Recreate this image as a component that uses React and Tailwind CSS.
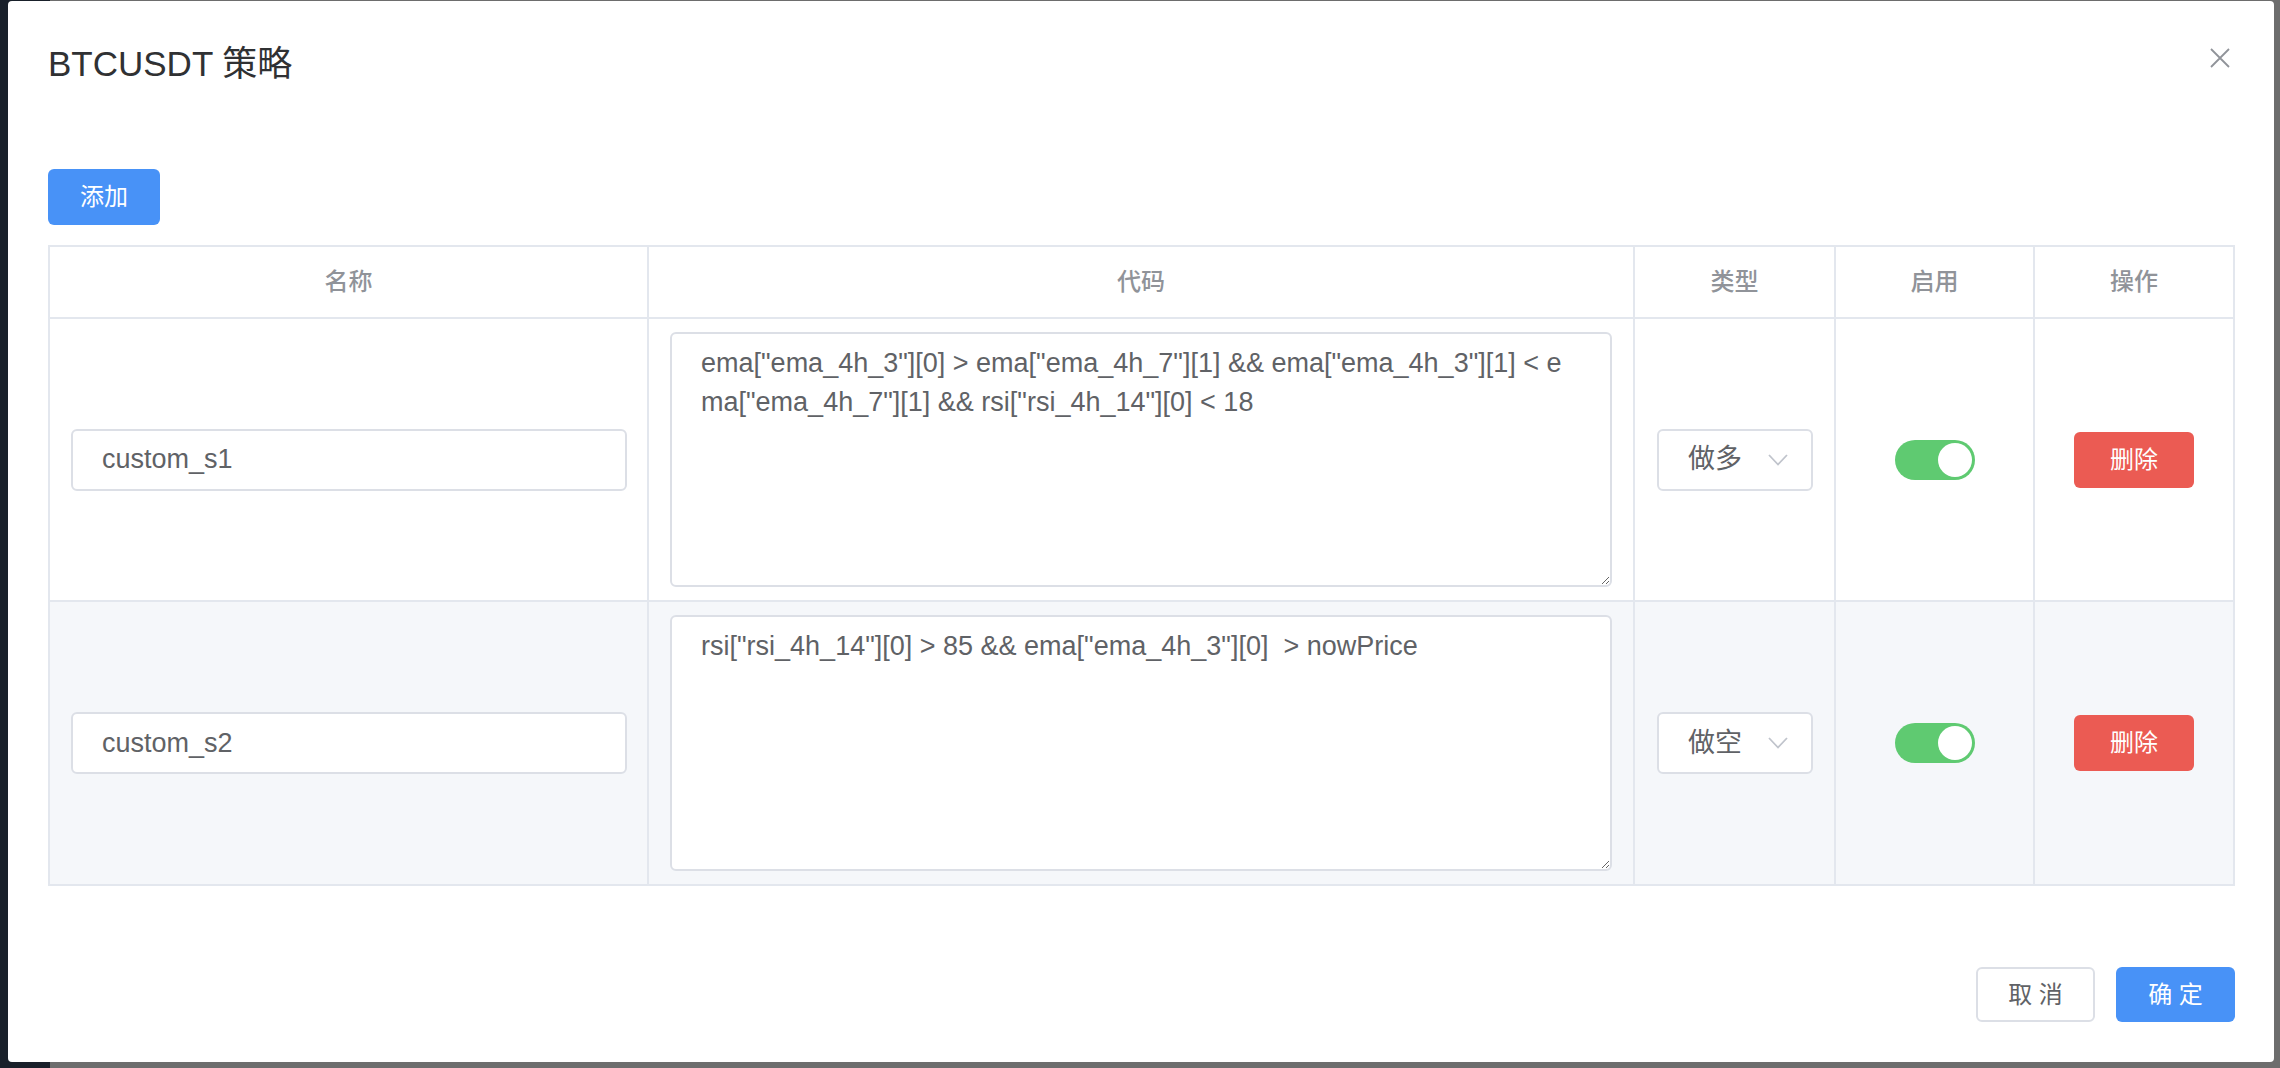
import React from "react";

const rows = [
  {
    name: "custom_s1",
    code: 'ema["ema_4h_3"][0] > ema["ema_4h_7"][1] && ema["ema_4h_3"][1] < e\nma["ema_4h_7"][1] && rsi["rsi_4h_14"][0] < 18',
    type: "做多",
    on: true,
    h: "h-[283px]",
  },
  {
    name: "custom_s2",
    code: 'rsi["rsi_4h_14"][0] > 85 && ema["ema_4h_3"][0]  > nowPrice',
    type: "做空",
    on: true,
    h: "h-[284px]",
  },
];

const headers = ["名称", "代码", "类型", "启用", "操作"];

function Switch({ on }) {
  return (
    <div className={`flex h-[40px] w-[80px] items-center rounded-full p-[3px] ${on ? "justify-end bg-[#5fca71]" : "justify-start bg-[#dcdfe6]"}`}>
      <div className="h-[34px] w-[34px] rounded-full bg-white" />
    </div>
  );
}

function Select({ value }) {
  return (
    <div className="flex h-[62px] w-[156px] items-center rounded-[6px] border-2 border-[#dcdfe6] bg-white pl-[29px] pr-[23px] text-[27px] text-[#606266]">
      <span>{value}</span>
      <svg className="ml-auto" width="20" height="12" viewBox="0 0 20 12" fill="none">
        <polyline points="1,1 10,10.5 19,1" stroke="#c0c4cc" strokeWidth="1.8" />
      </svg>
    </div>
  );
}

export default function App() {
  return (
    <div className="relative flex h-[1068px] w-[2280px] overflow-hidden bg-[#6d6d6d] font-['Liberation_Sans','Noto_Sans_CJK_SC',sans-serif]">
      <div className="w-[50px] bg-[#19202a]" />
      <div className="flex-1" />

      {/* dialog */}
      <div className="absolute left-[8px] top-[1px] flex h-[1061px] w-[2266px] flex-col rounded-[4px] bg-white pl-[40px] pr-[39px]">
        <h2 className="pt-[39px] text-[35px] leading-[48px] text-[#303133]">BTCUSDT 策略</h2>
        <button className="absolute right-[44px] top-[47px] h-[20px] w-[20px]">
          <svg width="20" height="20" viewBox="0 0 20 20" fill="none">
            <path d="M1 1 L19 19 M19 1 L1 19" stroke="#909399" strokeWidth="1.8" />
          </svg>
        </button>

        <button className="mt-[81px] h-[56px] w-[112px] self-start rounded-[6px] bg-[#4892f7] text-[24px] text-white">
          添加
        </button>

        <div className="mt-[20px] grid w-[2187px] grid-cols-[599px_986px_201px_199px_200px] border-l-2 border-t-2 border-[#e3e7ee]">
          {headers.map((h) => (
            <div
              key={h}
              className="flex h-[72px] items-center justify-center border-b-2 border-r-2 border-[#e3e7ee] text-[24px] font-medium text-[#909399]"
            >
              {h}
            </div>
          ))}

          {rows.map((r, i) => {
            const bg = i === 1 ? "bg-[#f5f7fa]" : "bg-white";
            const cell = `${r.h} ${bg} border-b-2 border-r-2 border-[#e3e7ee]`;
            return (
              <React.Fragment key={r.name}>
                <div className={`${cell} flex items-center pl-[21px] pr-[20px]`}>
                  <input
                    defaultValue={r.name}
                    className="h-[62px] w-full rounded-[6px] border-2 border-[#dcdfe6] bg-white pl-[29px] text-[27px] text-[#606266] outline-none"
                  />
                </div>
                <div className={`${cell} px-[21px] py-[13px]`}>
                  <textarea
                    defaultValue={r.code}
                    className="h-full w-full rounded-[6px] border-2 border-[#dcdfe6] bg-white px-[29px] pt-[10px] text-[27px] leading-[39px] text-[#606266] outline-none"
                  />
                </div>
                <div className={`${cell} flex items-center pl-[22px]`}>
                  <Select value={r.type} />
                </div>
                <div className={`${cell} flex items-center justify-center`}>
                  <Switch on={r.on} />
                </div>
                <div className={`${cell} flex items-center justify-center`}>
                  <button className="h-[56px] w-[120px] rounded-[6px] bg-[#eb5b53] text-[24px] text-white">删除</button>
                </div>
              </React.Fragment>
            );
          })}
        </div>

        <div className="mt-[81px] flex justify-end gap-[21px]">
          <button className="h-[55px] w-[119px] rounded-[6px] border-2 border-[#dcdfe6] bg-white text-[24px] text-[#606266]">
            取 消
          </button>
          <button className="h-[55px] w-[119px] rounded-[6px] bg-[#4892f7] text-[24px] text-white">确 定</button>
        </div>
      </div>
    </div>
  );
}
